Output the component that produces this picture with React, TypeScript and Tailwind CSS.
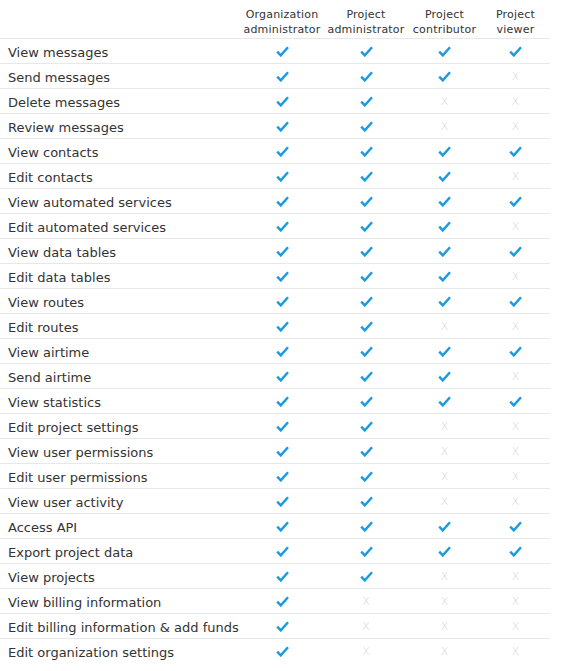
import React from 'react'

const roles = [
  ['Organization', 'administrator'],
  ['Project', 'administrator'],
  ['Project', 'contributor'],
  ['Project', 'viewer'],
]

// 4 = all roles, 3 = no viewer, 2 = admins only, 1 = org admin only
const permissions: [string, number][] = [
  ['View messages', 4],
  ['Send messages', 3],
  ['Delete messages', 2],
  ['Review messages', 2],
  ['View contacts', 4],
  ['Edit contacts', 3],
  ['View automated services', 4],
  ['Edit automated services', 3],
  ['View data tables', 4],
  ['Edit data tables', 3],
  ['View routes', 4],
  ['Edit routes', 2],
  ['View airtime', 4],
  ['Send airtime', 3],
  ['View statistics', 4],
  ['Edit project settings', 2],
  ['View user permissions', 2],
  ['Edit user permissions', 2],
  ['View user activity', 2],
  ['Access API', 4],
  ['Export project data', 4],
  ['View projects', 2],
  ['View billing information', 1],
  ['Edit billing information & add funds', 1],
  ['Edit organization settings', 1],
]

const cols = 'grid grid-cols-[240px_84px_84px_73px_69px] w-[550px]'

function Check() {
  return (
    <svg width="13" height="11" viewBox="0 0 13 11" className="block">
      <path d="M1.2 5.6 L4.8 9.4 L12 1.2" fill="none" stroke="#1b9ae1" strokeWidth="2.4" />
    </svg>
  )
}

function Cross() {
  return <span className="text-[11px] leading-none text-[#d6d6d6] font-light">X</span>
}

export default function App() {
  return (
    <div className="w-[565px] min-h-[671px] bg-white font-['DejaVu_Sans','Verdana',sans-serif] text-[13px] text-[#333]">
      <div className={`${cols} h-[38px] items-center`}>
        <div />
        {roles.map(([a, b], i) => (
          <div key={i} className="flex flex-col items-center text-[11px] leading-[15px] tracking-[0.2px] pt-[5px]">
            <span>{a}</span>
            <span>{b}</span>
          </div>
        ))}
      </div>
      {permissions.map(([label, level]) => (
        <div key={label} className={`${cols} h-[25px] items-center border-t border-[#e8e8e8]`}>
          <div className="pl-[8px] pt-[3px] whitespace-nowrap">{label}</div>
          {[0, 1, 2, 3].map((c) => (
            <div key={c} className="flex justify-center">
              {c < level ? <Check /> : <Cross />}
            </div>
          ))}
        </div>
      ))}
    </div>
  )
}
